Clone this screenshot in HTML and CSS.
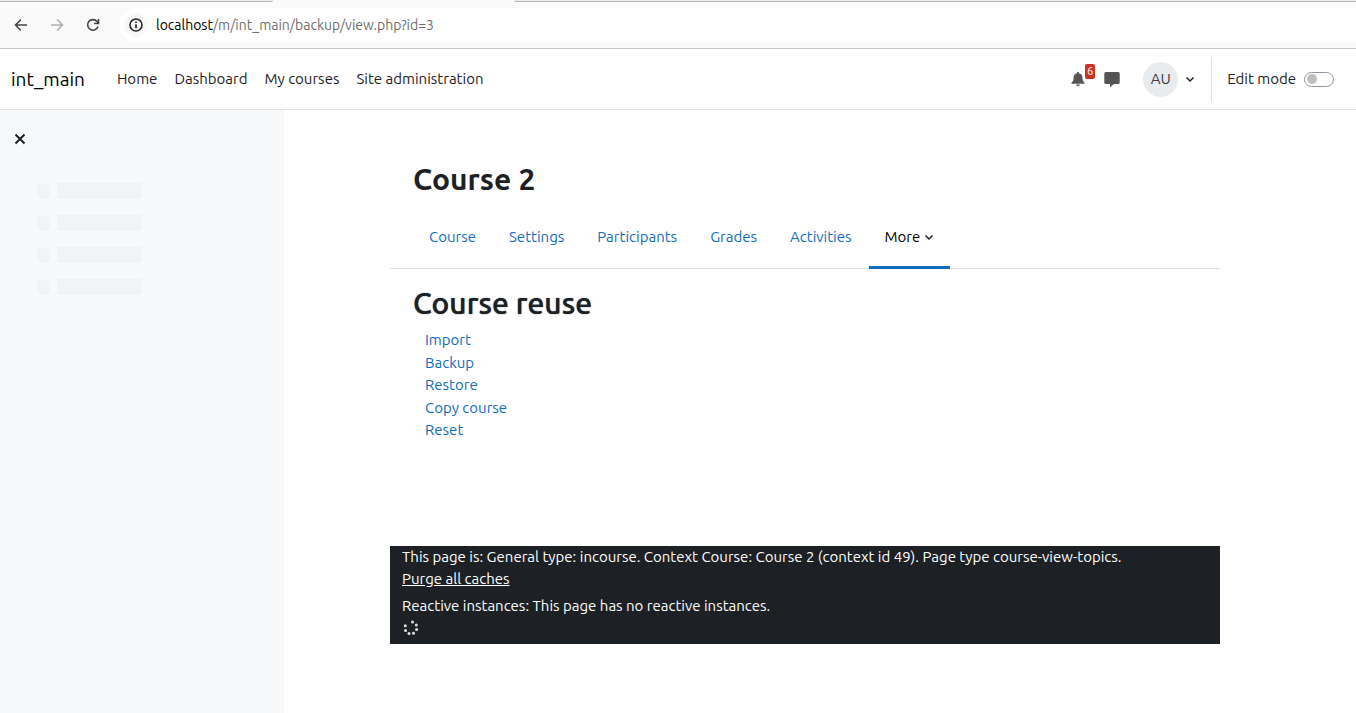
FILE: index.html
```html
<!DOCTYPE html>
<html lang="en">
<head>
<meta charset="utf-8">
<title>Course 2: Course reuse</title>
<link rel="stylesheet" href="styles.css">
</head>
<body>
<div class="browser">
  <div class="tab-strip"><span class="tab tab-left"></span><span class="tab-active"></span><span class="tab tab-right"></span></div>
  <div class="toolbar">
    <button class="tool" aria-label="Back"><svg width="16" height="16" viewBox="0 0 16 16"><path d="M14 8H3M8 2.500 2.500 8 8 13.500" /></svg></button>
    <button class="tool tool-off" aria-label="Forward" disabled><svg width="16" height="16" viewBox="0 0 16 16"><path d="M2 8h11M8 2.500 13.500 8 8 13.500" /></svg></button>
    <button class="tool" aria-label="Reload"><svg width="16" height="16" viewBox="0 0 16 16"><path d="M13 9.500A5.300 5.300 0 1 1 12 4.500L13.500 6M13.500 2v4.500H9" /></svg></button>
    <div class="address">
      <button class="site-info" aria-label="Site information"><svg width="16" height="16" viewBox="0 0 16 16"><circle cx="8" cy="8" r="6" /><path d="M8 7.300v4M8 4.600v1.500" /></svg></button>
      <span class="url"><b>localhost</b>/m/int_main/backup/view.php?id=3</span>
    </div>
  </div>
</div>
<header class="navbar">
  <a class="brand" href="#">int_main</a>
  <nav class="primary">
    <a href="#">Home</a><a href="#">Dashboard</a><a href="#">My courses</a><a href="#">Site administration</a>
  </nav>
  <div class="user-tools">
    <button class="bell" aria-label="Notifications"><svg width="14" height="16" viewBox="0 0 14 16"><path d="M7 0.800a.9.9 0 0 1 .9.9v.5C10.200 2.600 11.400 4.300 11.400 6.500c0 3 .8 4.100 2 5 .6.600.2 1.300-.5 1.300H1.100c-.7 0-1.100-.7-.5-1.300 1.200-.9 2-2 2-5 0-2.200 1.200-3.900 3.500-4.300v-.5A.9.9 0 0 1 7 .8zM5.200 13.500h3.600a1.800 1.800 0 0 1-3.600 0z"/></svg><span class="count">6</span></button>
    <button class="chat" aria-label="Messages"><svg width="16" height="16" viewBox="0 0 16 16"><path d="M1.800 1h12.400A1.500 1.500 0 0 1 15.700 2.500v9a1.500 1.500 0 0 1-1.500 1.500H10l-3.400 2.700c-.3.200-.6 0-.6-.3V13H1.800A1.500 1.500 0 0 1 .3 11.500v-9A1.500 1.500 0 0 1 1.800 1z"/></svg></button>
    <button class="account"><span class="avatar">AU</span><svg class="caret" width="10" height="10" viewBox="0 0 10 10"><path d="M1.500 3.500 5 7l3.500-3.500"/></svg></button>
    <div class="edit-mode">
      <label for="edit">Edit mode</label>
      <input class="switch" id="edit" type="checkbox">
    </div>
  </div>
</header>
<div class="page">
  <aside class="drawer">
    <button class="close" aria-label="Close course index"><svg width="12" height="12" viewBox="0 0 12 12"><path d="M1.500 1.500l9 9M10.500 1.500l-9 9"/></svg></button>
    <ul class="placeholders">
      <li><i class="dot"></i><i class="bar"></i></li>
      <li><i class="dot"></i><i class="bar"></i></li>
      <li><i class="dot"></i><i class="bar"></i></li>
      <li><i class="dot"></i><i class="bar"></i></li>
    </ul>
  </aside>
  <div class="content">
    <div class="column">
      <h1>Course 2</h1>
      <nav class="tabs">
        <a href="#">Course</a><a href="#">Settings</a><a href="#">Participants</a><a href="#">Grades</a><a href="#">Activities</a><button class="more">More<svg class="caret" width="10" height="10" viewBox="0 0 10 10"><path d="M1.500 3.500 5 7l3.500-3.500"/></svg></button>
      </nav>
      <main>
        <h2>Course reuse</h2>
        <ul class="links">
          <li><a href="#">Import</a></li>
          <li><a href="#">Backup</a></li>
          <li><a href="#">Restore</a></li>
          <li><a href="#">Copy course</a></li>
          <li><a href="#">Reset</a></li>
        </ul>
      </main>
      <footer>
        <p>This page is: General type: incourse. Context Course: Course 2 (context id 49). Page type course-view-topics.</p>
        <p class="purge"><a href="#">Purge all caches</a></p>
        <p>Reactive instances: This page has no reactive instances.</p>
        <svg class="spinner" width="16" height="16" viewBox="0 0 16 16"><circle cx="9.500" cy="2" r="1.500"/><circle cx="13.300" cy="5" r="1.500"/><circle cx="13.600" cy="9.500" r="1.500"/><circle cx="10.500" cy="13.300" r="1.500"/><circle cx="6" cy="13.500" r="1.500"/><circle cx="2.500" cy="10.500" r="1.500"/><circle cx="2.300" cy="5.800" r="1.500"/></svg>
      </footer>
    </div>
  </div>
</div>
</body>
</html>
```
FILE: styles.css
```css
* { box-sizing: border-box; }
body {
  margin: 0;
  min-height: 100vh;
  display: flex;
  flex-direction: column;
  font: 15px/22px Ubuntu, "Noto Sans", sans-serif;
  color: #1d2125;
  background: #fff;
}
button { font: inherit; color: inherit; background: none; border: 0; padding: 0; }
a { text-decoration: none; color: #0f6cbf; }
ul { list-style: none; margin: 0; padding: 0; }
p, h1, h2 { margin: 0; }
svg { display: block; }

.browser { background: #fafafa; border-bottom: 1px solid #c6c6c6; }
.tab-strip { display: grid; grid-template-columns: 273px 241px 1fr; height: 2px; }
.tab { background: #ececec; border-bottom: 1px solid #b4b4b4; }
.tab-left { border-bottom-right-radius: 6px; }
.tab-right { border-bottom-left-radius: 6px; }
.toolbar { display: flex; align-items: center; gap: 20px; height: 46px; padding-left: 13px; }
.tool svg, .site-info svg { fill: none; stroke: #444; stroke-width: 1.6; }
.site-info svg { stroke: #222; }
.tool-off svg { stroke: #b0b0b0; }
.address { flex: 1; display: flex; align-items: center; gap: 8px; height: 34px; padding-left: 5px; background: #fff; border-radius: 17px 0 0 17px; margin-left: -2px; }
.site-info { display: grid; place-items: center; width: 24px; height: 24px; border-radius: 12px; background: #f8f8f8; }
.url { color: #6f6f6f; font-size: 14px; }
.url b { font-weight: 400; color: #000; }

.navbar { display: flex; align-items: center; height: 61px; padding: 0 22px 0 11px; border-bottom: 1px solid #dee2e6; }
.brand { font-size: 19px; color: #000; margin-right: 32px; }
.primary { display: flex; gap: 17px; }
.primary a { color: #1d2125; }
.user-tools { display: flex; align-items: center; margin-left: auto; }
.bell, .chat { color: #555; }
.bell svg, .chat svg { fill: currentColor; }
.bell { position: relative; margin-right: 19px; }
.count { position: absolute; left: 14px; top: -7px; width: 10px; height: 15px; border-radius: 2px; background: #ca3120; color: #fff; font-size: 11px; line-height: 15px; }
.chat { margin-right: 23px; }
.account { display: flex; align-items: center; gap: 7px; }
.avatar { display: grid; place-items: center; width: 35px; height: 35px; border-radius: 50%; background: #e9ecef; color: #343a40; }
.caret { fill: none; stroke: #1d2125; stroke-width: 1.5; }
.edit-mode { display: flex; align-items: center; gap: 8px; height: 45px; margin-left: 16px; padding-left: 15px; border-left: 1px solid #dee2e6; }
.switch { appearance: none; display: flex; align-items: center; width: 30px; height: 15px; margin: 0; padding-left: 2px; border: 1px solid #8f959e; border-radius: 8px; background: #fff; }
.switch::before { content: ""; width: 10px; height: 10px; border-radius: 50%; background: #bfbfbf; }

.page { flex: 1; display: flex; }
.drawer { width: 284px; padding: 23px 14px; background: #f8f9fb; }
.close { display: block; }
.close svg { fill: none; stroke: #1d2125; stroke-width: 2; }
.placeholders { display: grid; gap: 16px; padding: 38px 0 0 23px; }
.placeholders li { display: flex; gap: 7px; }
.dot { width: 13px; height: 16px; border-radius: 50%; background: #f2f3f5; }
.bar { width: 85px; height: 16px; background: #f2f3f5; }

.content { flex: 1; padding: 49px 30px 0 0; }
.column { max-width: 830px; margin: 0 auto; }
h1, h2 { padding: 0 23px; font-size: 30px; line-height: 40px; }
h2 { font-family: "Ubuntu Medium", Ubuntu, "Noto Sans", sans-serif; font-weight: 500; -webkit-text-stroke: 1px transparent; text-shadow: 0 0 1px #1d2125; }
.tabs { display: flex; gap: 1px; margin-top: 7px; padding: 0 23px; height: 63px; border-bottom: 1px solid #dee2e6; }
.tabs a, .more { display: flex; align-items: center; padding: 0 16px; }
.more { gap: 4px; margin-bottom: -1px; padding-bottom: 1px; border-top: 3px solid transparent; border-bottom: 3px solid #0f6cbf; color: #000; }
main { min-height: 277px; padding-top: 14px; }
.links { padding: 6px 35px; line-height: 1.5; }
footer { padding: 0 12px 5px; background: #1d2125; color: #fff; }
.purge { margin-bottom: 5px; }
footer a { color: #fff; text-decoration: underline; }
.spinner { fill: #e0e0e0; margin: 3px 1px; }
```
